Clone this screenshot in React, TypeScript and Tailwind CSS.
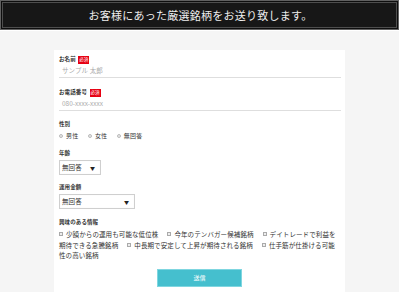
import React from "react";

const jp = { fontFamily: '"Noto Sans CJK JP", "Noto Sans", sans-serif' };

function Badge() {
  return (
    <span className="inline-flex items-center justify-center w-[11px] h-[8px] bg-[#e60012] text-white text-[4.5px] leading-none">
      必須
    </span>
  );
}

function Label({ text, req }: { text: string; req?: boolean }) {
  return (
    <div className="h-[9px] flex items-center gap-[2.5px]">
      <span className="text-[5.5px] font-bold text-[#333] tracking-[0.1px] leading-none">{text}</span>
      {req && <Badge />}
    </div>
  );
}

function Radio({ text }: { text: string }) {
  return (
    <span className="inline-flex items-center mr-[9.5px]">
      <span className="w-[4px] h-[4px] rounded-full border-[0.5px] border-[#bbb] bg-[#e8e8e8] mr-[3px]" />
      <span className="text-[6px] text-[#333] tracking-[0.2px] leading-none">{text}</span>
    </span>
  );
}

function Check({ text }: { text: string }) {
  return (
    <span className="mr-[9px]">
      <span className="inline-block align-middle w-[4px] h-[4px] border-[0.5px] border-[#aaa] bg-[#eee] mr-[3px] relative top-[-1px]" />
      {text}
    </span>
  );
}

function Select({ w }: { w: string }) {
  return (
    <div
      className={`${w} h-[15px] border border-[#cfcfcf] bg-white flex items-center justify-between pl-[2px] pr-[5px] shadow-[inset_0_0_1px_rgba(0,0,0,0.08)]`}
    >
      <span className="text-[6.5px] text-[#333] leading-none tracking-[0.1px]">無回答</span>
      <span className="text-[5px] text-[#222] leading-none">▼</span>
    </div>
  );
}

export default function App() {
  return (
    <div className="w-[399px] h-[292px] bg-[#f5f5f5] flex flex-col overflow-hidden" style={jp}>
      <div className="h-[31px] border-b border-white shrink-0">
        <div className="h-[30px] bg-[#0e0e0e] border border-[#606060] p-[1px]">
          <div className="h-full border border-[#4e4e4e] bg-[#171717] flex items-center justify-center">
            <span className="text-[11px] text-[#eeeeee] tracking-[0.25px] leading-none pl-[2px]">
              お客様にあった厳選銘柄をお送り致します。
            </span>
          </div>
        </div>
      </div>
      <div className="mt-[19px] mx-auto w-[291px] flex-1 bg-white pl-[5px] pr-[4px] pt-[5px] flex flex-col">
        <Label text="お名前" req />
        <div className="h-[14px] border-b border-[#dedede] flex items-center pl-[3px]">
          <span className="text-[6.5px] text-[#aaa] leading-none tracking-[0.1px]">サンプル 太郎</span>
        </div>
        <div className="mt-[10px]">
          <Label text="お電話番号" req />
        </div>
        <div className="h-[14px] border-b border-[#dedede] flex items-center pl-[3px]">
          <span className="text-[6.5px] text-[#aaa] leading-none">080-xxxx-xxxx</span>
        </div>
        <div className="mt-[9px]">
          <Label text="性別" />
        </div>
        <div className="mt-[1px] h-[11px] flex items-center">
          <Radio text="男性" />
          <Radio text="女性" />
          <Radio text="無回答" />
        </div>
        <div className="mt-[8px]">
          <Label text="年齢" />
        </div>
        <div className="mt-[2px]">
          <Select w="w-[42px]" />
        </div>
        <div className="mt-[8px]">
          <Label text="運用金額" />
        </div>
        <div className="mt-[2px]">
          <Select w="w-[76px]" />
        </div>
        <div className="mt-[9px]">
          <Label text="興味のある情報" />
        </div>
        <div className="mt-[2px] text-[6.5px] leading-[10.5px] tracking-[0.1px] text-[#333]">
          <Check text="少額からの運用も可能な低位株" />
          <Check text="今年のテンバガー候補銘柄" />
          <Check text="デイトレードで利益を期待できる急騰銘柄" />
          <Check text="中長期で安定して上昇が期待される銘柄" />
          <Check text="仕手筋が仕掛ける可能性の高い銘柄" />
        </div>
        <div className="mt-[8px] flex justify-center pr-[1px]">
          <div className="w-[85px] h-[18px] bg-[#45bfce] border border-[#7fd6e0] flex items-center justify-center">
            <span className="text-[6px] text-white leading-none">送信</span>
          </div>
        </div>
      </div>
    </div>
  );
}
